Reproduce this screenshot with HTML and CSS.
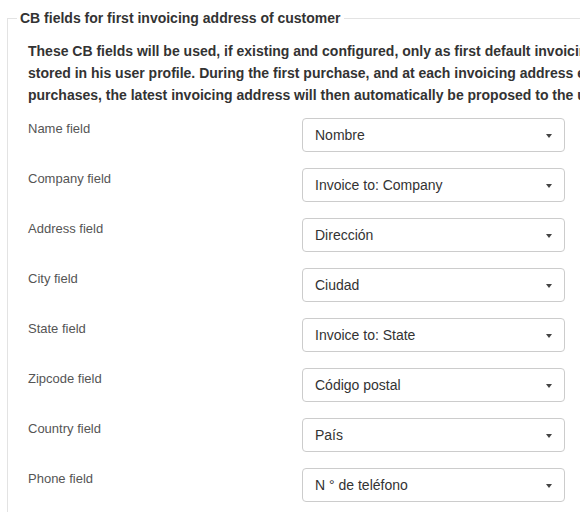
FILE: index.html
```html
<!DOCTYPE html>
<html>
<head>
<meta charset="utf-8">
<link rel="stylesheet" href="styles.css">
</head>
<body>
<fieldset class="group">
  <legend class="group-title">CB fields for first invoicing address of customer</legend>
  <p class="intro">These CB fields will be used, if existing and configured, only as first default invoicing address of the customer, if not<br>stored in his user profile. During the first purchase, and at each invoicing address edit in subsequent<br>purchases, the latest invoicing address will then automatically be proposed to the user for next purchases.</p>
  <div class="rows">
    <div class="row"><label class="row-label">Name field</label><span class="select-wrap"><select class="select"><option>Nombre</option></select></span></div>
    <div class="row"><label class="row-label">Company field</label><span class="select-wrap"><select class="select"><option>Invoice to: Company</option></select></span></div>
    <div class="row"><label class="row-label">Address field</label><span class="select-wrap"><select class="select"><option>Dirección</option></select></span></div>
    <div class="row"><label class="row-label">City field</label><span class="select-wrap"><select class="select"><option>Ciudad</option></select></span></div>
    <div class="row"><label class="row-label">State field</label><span class="select-wrap"><select class="select"><option>Invoice to: State</option></select></span></div>
    <div class="row"><label class="row-label">Zipcode field</label><span class="select-wrap"><select class="select"><option>Código postal</option></select></span></div>
    <div class="row"><label class="row-label">Country field</label><span class="select-wrap"><select class="select"><option>País</option></select></span></div>
    <div class="row"><label class="row-label">Phone field</label><span class="select-wrap"><select class="select"><option>N ° de teléfono</option></select></span></div>
  </div>
</fieldset>
</body>
</html>
```
FILE: styles.css
```css
html, body {
  margin: 0;
  padding: 0;
  background: #fff;
  overflow: hidden;
  font-family: "Liberation Sans", Arial, sans-serif;
  color: #333;
}
body {
  width: 580px;
  height: 512px;
}
.group {
  margin: 9px 0 0 7px;
  width: 720px;
  border: 1px solid #e3e3e3;
  padding: 0 20px 40px 20px;
  box-sizing: border-box;
  min-width: 0;
}
.group-title {
  margin-left: -11px;
  padding: 0 3px;
  font-size: 14px;
  font-weight: bold;
  line-height: 18px;
  color: #333;
}
.intro {
  margin: 13px 0 0 0;
  font-size: 14px;
  font-weight: bold;
  line-height: 22px;
  white-space: nowrap;
  color: #333;
}
.rows {
  margin-top: 12px;
  display: flex;
  flex-direction: column;
  gap: 16px;
}
.row {
  display: flex;
  align-items: flex-start;
}
.row-label {
  width: 274px;
  padding-top: 2px;
  font-size: 13px;
  line-height: 18px;
  color: #555;
}
.select-wrap {
  position: relative;
  display: block;
  width: 263px;
}
.select-wrap::after {
  content: "";
  position: absolute;
  right: 13px;
  top: 16px;
  border-left: 3.5px solid transparent;
  border-right: 3.5px solid transparent;
  border-top: 4px solid #444;
  pointer-events: none;
}
.select {
  appearance: none;
  -webkit-appearance: none;
  display: block;
  width: 100%;
  height: 34px;
  margin: 0;
  padding: 0 30px 0 12px;
  border: 1px solid #ccc;
  border-radius: 4px;
  background: #fff;
  font-family: "Liberation Sans", Arial, sans-serif;
  font-size: 14px;
  color: #333;
  box-sizing: border-box;
}
```
